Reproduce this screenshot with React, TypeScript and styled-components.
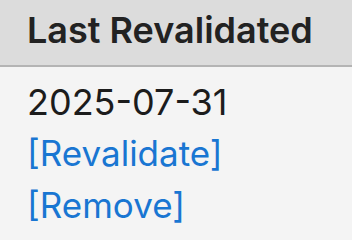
import React from "react";
import styled, { createGlobalStyle } from "styled-components";

const Global = createGlobalStyle`
  html, body { margin: 0; padding: 0; background: #f4f4f4; }
  body { font-family: Inter, "Noto Sans", sans-serif; }
`;

const Table = styled.table`
  border-collapse: collapse;
  width: 352px;
  font-family: Inter, "Noto Sans", sans-serif;
`;

const HeadCell = styled.th`
  background: #dcdcdc;
  color: #222;
  font-weight: 600;
  font-size: 36px;
  line-height: 51px;
  text-align: left;
  padding: 5px 27px 9px 27px;
  border-bottom: 2px solid #b4b4b4;
`;

const BodyCell = styled.td`
  background: #f4f4f4;
  color: #1c1c1c;
  font-size: 35px;
  line-height: 51.5px;
  padding: 9.5px 27px 10px 27px;
  vertical-align: top;
`;

const DateLine = styled.div`
  white-space: nowrap;
  font-size: 36px;
`;

const ActionLink = styled.a`
  display: block;
  color: #1976d2;
  text-decoration: none;
  white-space: nowrap;
  cursor: pointer;
`;

export default function App() {
  return (
    <>
      <Global />
      <Table>
        <thead>
          <tr>
            <HeadCell>Last Revalidated</HeadCell>
          </tr>
        </thead>
        <tbody>
          <tr>
            <BodyCell>
              <DateLine>2025-07-31</DateLine>
              <ActionLink href="#">[Revalidate]</ActionLink>
              <ActionLink href="#">[Remove]</ActionLink>
            </BodyCell>
          </tr>
        </tbody>
      </Table>
    </>
  );
}
